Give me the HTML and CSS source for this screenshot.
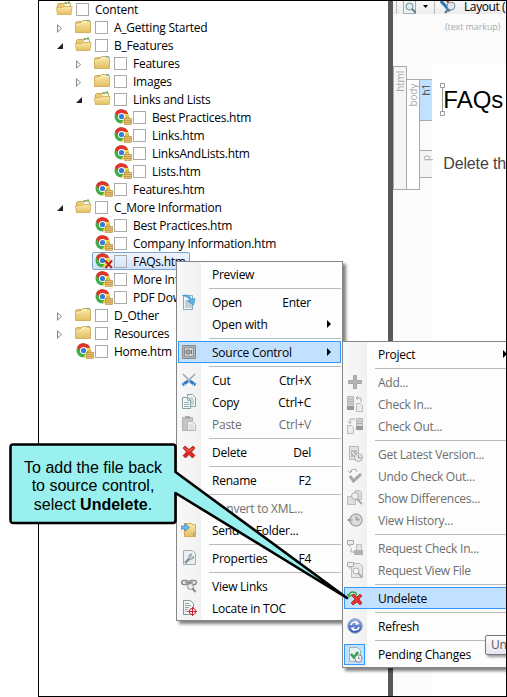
FILE: index.html
```html
<!DOCTYPE html>
<html lang="en">
<head>
<meta charset="utf-8">
<title>Content Explorer</title>
<link rel="stylesheet" href="styles.css">
</head>
<body>
<svg class="defs" aria-hidden="true">
  <defs>
    <linearGradient id="gold" x1="0" y1="0" x2="0" y2="1"><stop offset="0" stop-color="#fbe9a9"/><stop offset="1" stop-color="#e3be63"/></linearGradient>
    <linearGradient id="blue" x1="0" y1="0" x2="0" y2="1"><stop offset="0" stop-color="#9cb8ec"/><stop offset="1" stop-color="#274fae"/></linearGradient>
  </defs>
  <symbol id="closed" viewBox="0 0 17 16"><path d="M.5 13.500v-10l1-1h5l1-1h7l1 1v11z" fill="url(#gold)" stroke="#d3b260"/><path d="M1 5h5l2-2h7" fill="none" stroke="#fff3c5"/><path d="M1 4h4l2-2" fill="none" stroke="#c6a451"/><path d="M12 2h3" stroke="#3fa5db"/></symbol>
  <symbol id="opened" viewBox="0 0 17 16"><path d="M1.500 13.500v-10l1-1h5l1-1h5l1 1v10z" fill="#e9ca77" stroke="#c9a756"/><path d="M9 2.500h5v3H9z" fill="#f8f8ea"/><path d="M9 2.500h2" stroke="#3ba8dc"/><path d="M12 1.500h2" stroke="#46bd4b" stroke-width="2"/><path d="M.5 6.500h6l2-1h7.500l-1 8H1.500z" fill="url(#gold)" stroke="#d8b764"/></symbol>
  <symbol id="globe" viewBox="0 0 18 16"><circle cx="7.500" cy="7.500" r="7" fill="#3fae49"/><path d="M1.200 4.200A7 7 0 0 1 14.200 5H7.500z" fill="#df342c"/><path d="M1.200 4.200A7 7 0 0 1 7 .5l1 4.500-3.500 4z" fill="#df342c"/><path d="M14.200 5A7 7 0 0 1 7.200 14.500L11 8 9 4.700z" fill="#fbd43a"/><circle cx="7.500" cy="7.500" r="3.600" fill="#fff"/><circle cx="7.500" cy="7.500" r="2.600" fill="#337dd3"/></symbol>
  <symbol id="page" viewBox="0 0 18 16"><use href="#globe" width="18" height="16"/><path d="M11.500 10V8.500q2-2 3.500 0V10" fill="none" stroke="#b79552"/><rect x="10.500" y="9.500" width="7" height="6" fill="#e9c36e" stroke="#ad8540" stroke-width=".6"/><path d="M10.500 11.500h7M10.500 13.500h7" stroke="#b48a43" stroke-width=".7"/></symbol>
  <symbol id="gone" viewBox="0 0 18 16"><use href="#globe" width="18" height="16"/><path d="M10 7.500l7 7.500M17 7.500L10.500 15" stroke="#bd2420" stroke-width="2" fill="none"/></symbol>
  <symbol id="open" viewBox="0 0 16 16"><path d="M2.500 1.500h9v14h-9z" fill="#eef6f8" stroke="#8badb8"/><path d="M4 7h5M4 9h7M4 11h7M4 13h7" stroke="#94acb5"/><path d="M1.500 1.500q7-2 9 4l3.500-1-1.500 6.500-6-4 2.500-.5q-1.500-4-7.500-5z" fill="#58b6ec" stroke="#3b8dc7" stroke-width=".7"/></symbol>
  <symbol id="safe" viewBox="0 0 16 16"><path d="M1.500 1.500h13v13h-13z" fill="#b8b8bb" stroke="#88888c"/><path d="M3.500 3.500h9v9h-9z" fill="#cfcfd1" stroke="#929296"/><circle cx="7" cy="8" r="2.200" fill="#aaa" stroke="#77777b"/><path d="M10.500 6v4" stroke="#77777b"/></symbol>
  <symbol id="cut" viewBox="0 0 16 16"><path d="M2 2l9 9M14 2l-9 9" stroke="#9fabb6" stroke-width="1.700"/><path d="M7 9l-5.500 4M9 9l5.500 4" stroke="#367bc7" stroke-width="3"/><path d="M2.500 11.500l2 2M13.500 11.500l-2 2" stroke="#a9d3f4"/></symbol>
  <symbol id="copy" viewBox="0 0 16 16"><path d="M6.500.500h5l3 3v9h-8z" fill="#f2f8f8" stroke="#85a2a5"/><path d="M8 4h4M8 6h5M10 8h3M10 10h3" stroke="#9fb4b5"/><path d="M1.500 3.500h5l3 3v8h-8z" fill="#f2f8f8" stroke="#85a2a5"/><path d="M6.500 3.500v3h3M3 8.500h5M3 10.500h5M3 12.500h5" fill="none" stroke="#96afb1"/></symbol>
  <symbol id="paste" viewBox="0 0 16 16"><path d="M1.500 1.500h10v13h-10z" fill="#c6c6c6" stroke="#b5b5b5"/><path d="M4 0h5v3H4z" fill="#aaa"/><path d="M6.500 5.500h5l3 3v6h-8z" fill="#f0f0f0" stroke="#b7b7b7"/><path d="M8 9h4M8 11h5M8 13h5" stroke="#ccc"/></symbol>
  <symbol id="delete" viewBox="0 0 16 16"><path d="M4 2l4 3.500L12 2l2 2-3.500 4 3.500 3.500-2.500 2.500L8 10.500 4.500 14 2 11.500 5.500 8 2 4z" fill="#d92722" stroke="#a81917" stroke-width=".7"/><path d="M3.500 4L8 7.500 12 4" fill="none" stroke="#f27870"/></symbol>
  <symbol id="send" viewBox="0 0 16 16"><path d="M3.500 1.500h7l1 1h3v12h-11z" fill="url(#gold)" stroke="#d4ad55"/><path d="M12.500 14.500v-3l2-1" fill="none" stroke="#4eabe4"/><path d="M0 4h4V1.500L8.500 5.500 4 9V7H0z" fill="#6bc0f0" stroke="#2f85c2" stroke-width=".7"/></symbol>
  <symbol id="props" viewBox="0 0 16 16"><path d="M2.500.500h9l3 3v11h-12z" fill="#e8f0f2" stroke="#9eb0b4"/><path d="M4 13l5-5" stroke="#8e979c" stroke-width="2.500"/><path d="M8.500 4.500q-2 4 1 5 3 0 3.500-3l-2 1-1.500-1.500 1.500-2z" fill="#c8ced1" stroke="#858e93" stroke-width=".8"/></symbol>
  <symbol id="links" viewBox="0 0 16 16"><g fill="none" stroke="#858c90"><rect x=".7" y="2.500" width="6.500" height="4" rx="2" stroke-width="1.500"/><rect x="8.500" y="2.500" width="6.800" height="4" rx="2" stroke-width="1.500"/><path d="M4 4.500h8" stroke-width="1.500"/><circle cx="9.500" cy="8.500" r="3" fill="#e7eef1"/><path d="M11.500 10.500l3 3.500" stroke-width="2"/></g></symbol>
  <symbol id="locate" viewBox="0 0 16 16"><path d="M2.500.500h7l3 3v11h-10z" fill="#eef5f4" stroke="#829c9b"/><path d="M4 3.500h4M4 5.500h6M4 7.500h4M4 9.500h3M4 11.500h3" stroke="#91a6a5"/><circle cx="11.500" cy="11.500" r="3.200" fill="#fff" stroke="#c52236"/><path d="M11.500 7v9M7 11.500h9" stroke="#c52236"/></symbol>
  <symbol id="add" viewBox="0 0 16 16"><path d="M6.500 1.500h3v5h5v3h-5v5h-3v-5h-5v-3h5z" fill="#b5b5b5" stroke="#a5a5a5"/></symbol>
  <symbol id="checkin" viewBox="0 0 16 16"><path d="M.5.500h6v13h-6z" fill="#d8d8d8" stroke="#b9b9b9"/><path d="M0 10h7v4H0z" fill="#999"/><path d="M1 3h5M1 5.500h5M1 8h5" stroke="#aaa"/><path d="M9 2h5v4M9 2l2-2M9 2l2 2" fill="none" stroke="#aaa"/><path d="M9.500 7.500h4l2 2v6h-6z" fill="#ebebeb" stroke="#bcbcbc"/></symbol>
  <symbol id="checkout" viewBox="0 0 16 16"><path d="M9.500.500h6v11h-6z" fill="#d8d8d8" stroke="#b9b9b9"/><path d="M9 8h7v4H9z" fill="#999"/><path d="M10 3h5M10 5.500h5" stroke="#aaa"/><path d="M8 1H3v4M1 3.500L3 5.500l2-2" fill="none" stroke="#aaa"/><path d="M.5 7.500h4l2 2v6h-6z" fill="#ebebeb" stroke="#bcbcbc"/></symbol>
  <symbol id="latest" viewBox="0 0 16 16"><path d="M2.500.500h9v13h-9z" fill="#e2e2e2" stroke="#b7b7b7"/><path d="M4 4h6v7H4z" fill="#bbb"/><path d="M5 6l4 4" stroke="#fff"/><circle cx="11.500" cy="11.500" r="4" fill="#e9e9e9" stroke="#aaa"/><path d="M11.500 9v3h3" fill="none" stroke="#999"/></symbol>
  <symbol id="undo" viewBox="0 0 16 16"><path d="M3 8l3.500 5L14 6" fill="none" stroke="#a5a5a5" stroke-width="3"/><path d="M3 5q0-4 4-4 3 0 3 3M1 3l2 2 2-2" fill="none" stroke="#aaa"/></symbol>
  <symbol id="diff" viewBox="0 0 16 16"><path d="M.5 6.500h6l2 2v6h-8zM8.500.500h4l2 2v7h-6z" fill="#dedede" stroke="#bdbdbd"/><circle cx="8" cy="6" r="3.500" fill="#eee" stroke="#aaa"/><path d="M10 9l5 5" stroke="#aaa" stroke-width="2"/></symbol>
  <symbol id="history" viewBox="0 0 16 16"><circle cx="9" cy="8" r="6" fill="#ddd" stroke="#ababab" stroke-width="1.500"/><path d="M9 4v4h4M0 8h6M1 8l2.500-2v4z" fill="#aaa" stroke="#a0a0a0"/></symbol>
  <symbol id="reqin" viewBox="0 0 16 16"><path d="M.5.500h6v4h-3l-1 2v-2h-2z" fill="#eee" stroke="#aaa"/><path d="M9.500 4.500h5v6h-5z" fill="#e5e5e5" stroke="#bbb"/><path d="M7 10h9v5H7z" fill="#b1b1b1"/><path d="M4 8v4h3" fill="none" stroke="#aaa"/></symbol>
  <symbol id="reqview" viewBox="0 0 16 16"><path d="M4.500 1.500h8l3 3v11h-11z" fill="#e8e8e8" stroke="#bbb"/><path d="M.5.500h6v4h-3l-1 2v-2h-2z" fill="#eee" stroke="#aaa"/><circle cx="9" cy="9" r="3" fill="#f7f7f7" stroke="#aaa"/><path d="M11 11l4 4" stroke="#aaa" stroke-width="2"/></symbol>
  <symbol id="undelete" viewBox="0 0 16 16"><path d="M5 5l2-1 3 3 3-3 2 2-3 3 3 4-2 2-3-3-4 3-2-2 4-4-3-3z" fill="#df352b" stroke="#a91c18" stroke-width=".7"/><path d="M2 6q0-4 4-4 3 0 4 3M0 4l2 2.500L5 5" fill="none" stroke="#38a944" stroke-width="1.400"/></symbol>
  <symbol id="refresh" viewBox="0 0 16 16"><circle cx="8" cy="8" r="7.200" fill="url(#blue)" stroke="#8c9ab9"/><path d="M4 7q1-4 6-2.500M12 9q-1 4-6 2.500" fill="none" stroke="#fff" stroke-width="1.600"/><path d="M9 2.500L12.500 6 8.500 7zM7 13.500L3.500 10 7.500 9z" fill="#fff"/></symbol>
  <symbol id="pending" viewBox="0 0 16 16"><path d="M2.500.500h8l3 3v11h-11z" fill="#e9f1f3" stroke="#a0b2b6"/><path d="M4 7l3 3.500L11 5" fill="none" stroke="#28a344" stroke-width="2.500"/><circle cx="11.500" cy="11.500" r="3.700" fill="#f2f5f6" stroke="#7d8789"/><path d="M11.500 9.500v2h2" fill="none" stroke="#7d8789"/></symbol>
</svg>

<main class="frame">
  <section class="tree">
    <div class="row"><i class="tw"></i><svg class="ic"><use href="#opened"/></svg><b></b><span>Content</span></div>
    <div class="row l1"><i class="tw shut"></i><svg class="ic"><use href="#closed"/></svg><b></b><span>A_Getting Started</span></div>
    <div class="row l1"><i class="tw exp"></i><svg class="ic"><use href="#opened"/></svg><b></b><span>B_Features</span></div>
    <div class="row l2"><i class="tw shut"></i><svg class="ic"><use href="#closed"/></svg><b></b><span>Features</span></div>
    <div class="row l2"><i class="tw shut"></i><svg class="ic"><use href="#closed"/></svg><b></b><span>Images</span></div>
    <div class="row l2"><i class="tw exp"></i><svg class="ic"><use href="#opened"/></svg><b></b><span>Links and Lists</span></div>
    <div class="row l3"><i class="tw"></i><svg class="ic doc"><use href="#page"/></svg><b></b><span>Best Practices.htm</span></div>
    <div class="row l3"><i class="tw"></i><svg class="ic doc"><use href="#page"/></svg><b></b><span>Links.htm</span></div>
    <div class="row l3"><i class="tw"></i><svg class="ic doc"><use href="#page"/></svg><b></b><span>LinksAndLists.htm</span></div>
    <div class="row l3"><i class="tw"></i><svg class="ic doc"><use href="#page"/></svg><b></b><span>Lists.htm</span></div>
    <div class="row l2"><i class="tw"></i><svg class="ic doc"><use href="#page"/></svg><b></b><span>Features.htm</span></div>
    <div class="row l1"><i class="tw exp"></i><svg class="ic"><use href="#opened"/></svg><b></b><span>C_More Information</span></div>
    <div class="row l2"><i class="tw"></i><svg class="ic doc"><use href="#page"/></svg><b></b><span>Best Practices.htm</span></div>
    <div class="row l2"><i class="tw"></i><svg class="ic doc"><use href="#page"/></svg><b></b><span>Company Information.htm</span></div>
    <div class="row l2"><i class="tw"></i><div class="picked"><svg class="ic doc"><use href="#gone"/></svg><b></b><span>FAQs.htm</span></div></div>
    <div class="row l2"><i class="tw"></i><svg class="ic doc"><use href="#page"/></svg><b></b><span>More Inf</span></div>
    <div class="row l2"><i class="tw"></i><svg class="ic doc"><use href="#page"/></svg><b></b><span>PDF Dow</span></div>
    <div class="row l1"><i class="tw shut"></i><svg class="ic"><use href="#closed"/></svg><b></b><span>D_Other</span></div>
    <div class="row l1"><i class="tw shut"></i><svg class="ic"><use href="#closed"/></svg><b></b><span>Resources</span></div>
    <div class="row l1"><i class="tw"></i><svg class="ic doc"><use href="#page"/></svg><b></b><span>Home.htm</span></div>
  </section>

  <section class="editor">
    <div class="bar">
      <i class="vline"></i>
      <svg class="tool" viewBox="0 0 13 13"><path d="M.5-2h12v14.500H.5z" fill="#edf4f6" stroke="#9bb0b5"/><circle cx="6.500" cy="5.500" r="3.500" fill="#dcecf3" stroke="#78898f"/><path d="M9 8l4 4" stroke="#6d7b81" stroke-width="2"/></svg>
      <i class="down"></i><i class="vline"></i>
      <svg class="tool wide" viewBox="0 0 16 13"><path d="M1 0l9 10" stroke="#2678bb" stroke-width="3"/><path d="M6-1l4 4" stroke="#d23b37" stroke-width="2"/><circle cx="11" cy="5" r="4" fill="#dfe8ec" stroke="#7d8b92"/><path d="M8.500 8L5 12" stroke="#68757b" stroke-width="2"/></svg>
      <span>Layout (</span>
    </div>
    <div class="markup">(text markup)</div>
    <div class="work">
      <div class="tags"><div class="tag html"><span>html</span></div><div class="tag body"><span>body</span></div><div class="blocks"><div class="tag h1"><span>h1</span></div><div class="tag p"><span>p</span></div></div></div>
      <div class="paper"><div class="head"><svg class="grip" viewBox="0 0 5 33"><path d="M2.500 4v25M.5.500h4v4h-4zM.5 28.500h4v4h-4z" fill="#fff" stroke="#999"/></svg><h1>FAQs</h1></div><p>Delete th</p></div>
    </div>
  </section>

  <div class="menu main">
    <div class="item"><i></i><span>Preview</span></div><hr>
    <div class="item"><i><svg><use href="#open"/></svg></i><span>Open</span><kbd>Enter</kbd></div>
    <div class="item"><i></i><span>Open with</span><em></em></div><hr>
    <div class="item on"><i><svg><use href="#safe"/></svg></i><span>Source Control</span><em></em></div><hr>
    <div class="item"><i><svg><use href="#cut"/></svg></i><span>Cut</span><kbd>Ctrl+X</kbd></div>
    <div class="item"><i><svg><use href="#copy"/></svg></i><span>Copy</span><kbd>Ctrl+C</kbd></div>
    <div class="item off"><i><svg><use href="#paste"/></svg></i><span>Paste</span><kbd>Ctrl+V</kbd></div><hr>
    <div class="item"><i><svg><use href="#delete"/></svg></i><span>Delete</span><kbd>Del</kbd></div><hr>
    <div class="item"><i></i><span>Rename</span><kbd>F2</kbd></div><hr>
    <div class="item off"><i></i><span>Convert to XML...</span></div>
    <div class="item"><i><svg><use href="#send"/></svg></i><span>Send to Folder...</span></div><hr>
    <div class="item"><i><svg><use href="#props"/></svg></i><span>Properties</span><kbd>F4</kbd></div><hr>
    <div class="item"><i><svg><use href="#links"/></svg></i><span>View Links</span></div>
    <div class="item"><i><svg><use href="#locate"/></svg></i><span>Locate in TOC</span></div>
  </div>

  <div class="menu sub">
    <div class="item"><i></i><span>Project</span><em></em></div><hr>
    <div class="item off"><i><svg><use href="#add"/></svg></i><span>Add...</span></div>
    <div class="item off"><i><svg><use href="#checkin"/></svg></i><span>Check In...</span></div>
    <div class="item off"><i><svg><use href="#checkout"/></svg></i><span>Check Out...</span></div><hr>
    <div class="item off"><i><svg><use href="#latest"/></svg></i><span>Get Latest Version...</span></div>
    <div class="item off"><i><svg><use href="#undo"/></svg></i><span>Undo Check Out...</span></div>
    <div class="item off"><i><svg><use href="#diff"/></svg></i><span>Show Differences...</span></div>
    <div class="item off"><i><svg><use href="#history"/></svg></i><span>View History...</span></div><hr>
    <div class="item off"><i><svg><use href="#reqin"/></svg></i><span>Request Check In...</span></div>
    <div class="item off"><i><svg><use href="#reqview"/></svg></i><span>Request View File</span></div><hr>
    <div class="item on"><i><svg><use href="#undelete"/></svg></i><span>Undelete</span></div><hr>
    <div class="item"><i><svg><use href="#refresh"/></svg></i><span>Refresh</span></div><hr>
    <div class="item"><i class="checked"><svg><use href="#pending"/></svg></i><span>Pending Changes</span></div>
  </div>
  <div class="tip">Un</div>
</main>

<div class="callout">
  <svg viewBox="0 0 342 160"><path d="M4 2.500H164Q166.500 2.500 166.500 5V30L338 156 166.500 51V78Q166.500 81 164 81H4Q1.500 81 1.500 78V5Q1.500 2.500 4 2.500z" fill="#99f0ee" stroke="#000" stroke-width="2.600" stroke-linejoin="round"/></svg>
  <p>To add the file back<br>to source control,<br>select <strong>Undelete</strong>.</p>
</div>
</body>
</html>
```
FILE: styles.css
```css
* { box-sizing: border-box; }
body {
  margin: 0;
  width: 507px;
  height: 697px;
  overflow: hidden;
  position: relative;
  background: #fff;
  color: #000;
  font: 12px/18px "Open Sans", "Noto Sans", sans-serif;
  letter-spacing: -0.25px;
}
.defs { position: absolute; width: 0; height: 0; }
.frame {
  position: relative;
  display: flex;
  width: 469px;
  height: 697px;
  margin-left: 38px;
  border: 1px solid #000;
  overflow: hidden;
  white-space: nowrap;
}

/* Content tree */
.tree { width: 349px; flex: none; margin-top: -1px; }
.row, .picked { display: flex; align-items: center; height: 18px; }
.row span { padding-top: 1px; }
.l1 { padding-left: 19px; }
.l2 { padding-left: 38px; }
.l3 { padding-left: 57px; }
.tw { width: 17px; height: 18px; flex: none; }
.tw::before { content: ""; display: block; }
.shut::before {
  width: 5px;
  height: 9px;
  margin: 6px 0 0 -1px;
  background: #888;
  clip-path: polygon(0 0, 100% 50%, 0 100%, 0 0, 1px 2px, 1px 7px, 4px 50%, 1px 2px);
}
.exp::before {
  width: 6px;
  height: 6px;
  margin: 7px 0 0 -1px;
  background: #222;
  clip-path: polygon(100% 0, 100% 100%, 0 100%);
}
.ic { width: 17px; height: 16px; flex: none; overflow: visible; }
.ic.doc { width: 18px; margin: 0 -2px 0 1px; }
.row b {
  width: 13px;
  height: 13px;
  flex: none;
  margin: 1px 6px 0 3px;
  border: 1px solid #aaa;
}
.picked {
  width: 98px;
  margin-left: -2px;
  padding-left: 1px;
  border: 1px solid #7da2ce;
  border-radius: 2px;
  background: linear-gradient(#eef5fe, #cde2fb);
}

/* Editor pane */
.editor { flex: 1; min-width: 0; border-left: 5px solid #58585a; background: #fbfbfb; }
.bar {
  display: flex;
  height: 13px;
  padding-left: 3px;
  background: linear-gradient(#f8f8f8, #ececec);
  overflow: hidden;
}
.vline { width: 1px; height: 13px; flex: none; background: #bbb; }
.tool { width: 13px; height: 13px; flex: none; margin: 0 7px 0 6px; }
.tool.wide { width: 16px; margin: 0 8px 0 5px; }
.down {
  width: 5px;
  height: 3px;
  flex: none;
  margin: 4px 6px 0 0;
  background: #000;
  clip-path: polygon(0 0, 100% 0, 50% 100%);
}
.bar span { line-height: 11px; letter-spacing: -0.4px; }
.markup { padding-left: 52px; height: 50px; font-size: 9px; line-height: 25px; color: #aaa; letter-spacing: -0.1px; }
.work { display: flex; }
.tags { display: flex; width: 40px; height: 126px; padding-top: 2px; }
.tag {
  width: 14px;
  margin-right: -1px;
  padding-top: 4px;
  border: 1px solid #aaa;
  color: #aaa;
  font-size: 10px;
  line-height: 12px;
  letter-spacing: -0.2px;
}
.tag span { display: block; writing-mode: vertical-rl; transform: rotate(180deg); }
.tag.html { height: 124px; background: #f5f5f5; }
.tag.body { height: 111px; margin-top: 13px; background: #fff; }
.blocks { padding-top: 13px; }
.tag.h1 { height: 42px; background: #c2e0ff; color: #444; }
.tag.p { height: 28px; margin-top: 29px; background: #f5f5f5; }
.paper { flex: 1; height: 632px; padding: 19px 0 0 8px; background: #fff; font-family: "Liberation Sans", sans-serif; letter-spacing: 0; }
.head { display: flex; height: 33px; }
.grip { width: 5px; height: 33px; flex: none; margin-right: -2px; }
h1 { margin: 0; font-size: 24px; line-height: 33px; font-weight: 400; }
.paper p { margin: 39px 0 0 3px; font-size: 16px; line-height: 18px; color: #444; letter-spacing: -0.15px; }

/* Context menus */
.menu {
  position: absolute;
  padding: 1px;
  border: 1px solid #868686;
  background: linear-gradient(90deg, #f8f8f8, #f1f1f1 24px, #fdfdfd 24px);
  box-shadow: 3px 3px 3px rgba(0, 0, 0, .5);
}
.main { left: 137px; top: 260px; width: 167px; height: 360px; }
.sub { left: 303px; top: 340px; width: 180px; height: 327px; }
.item { display: flex; align-items: center; height: 22px; }
.item span, .item kbd { padding-top: 1px; }
.item i { width: 34px; height: 20px; flex: none; padding: 2px 0 0 3px; }
.item i svg { display: block; width: 16px; height: 16px; }
.item.on { background: #c2e0ff; box-shadow: inset 0 0 0 1px #3399ff; }
.item.off { color: #6d6d6d; }
.item kbd { margin-left: auto; padding-right: 30px; font: inherit; }
.item em {
  width: 4px;
  height: 8px;
  margin: 0 10px 0 auto;
  background: #000;
  clip-path: polygon(0 0, 100% 50%, 0 100%);
}
.menu hr { height: 1px; margin: 3px 0 2px 31px; border: 0; background: #bbb; }
.item .checked { width: 21px; height: 21px; margin-right: 13px; padding: 2px; border: 1px solid #3399ff; background: #c2e0ff; }
.sub .item em { margin-right: 13px; }
.tip {
  position: absolute;
  left: 446px;
  top: 634px;
  width: 40px;
  height: 20px;
  padding-left: 5px;
  border: 1px solid #767676;
  border-radius: 2px;
  background: linear-gradient(#fff, #e4e5f0);
  box-shadow: 2px 2px 3px rgba(0, 0, 0, .4);
  color: #575757;
}

/* Annotation balloon */
.callout { position: absolute; left: 8.5px; top: 441.5px; width: 342px; height: 160px; }
.callout svg { position: absolute; inset: 0; width: 342px; height: 160px; }
.callout p {
  position: relative;
  width: 169px;
  margin: 0;
  padding-top: 17px;
  text-align: center;
  white-space: nowrap;
  font: 16px/18.500px "Liberation Sans", sans-serif;
  letter-spacing: 0;
}
```
